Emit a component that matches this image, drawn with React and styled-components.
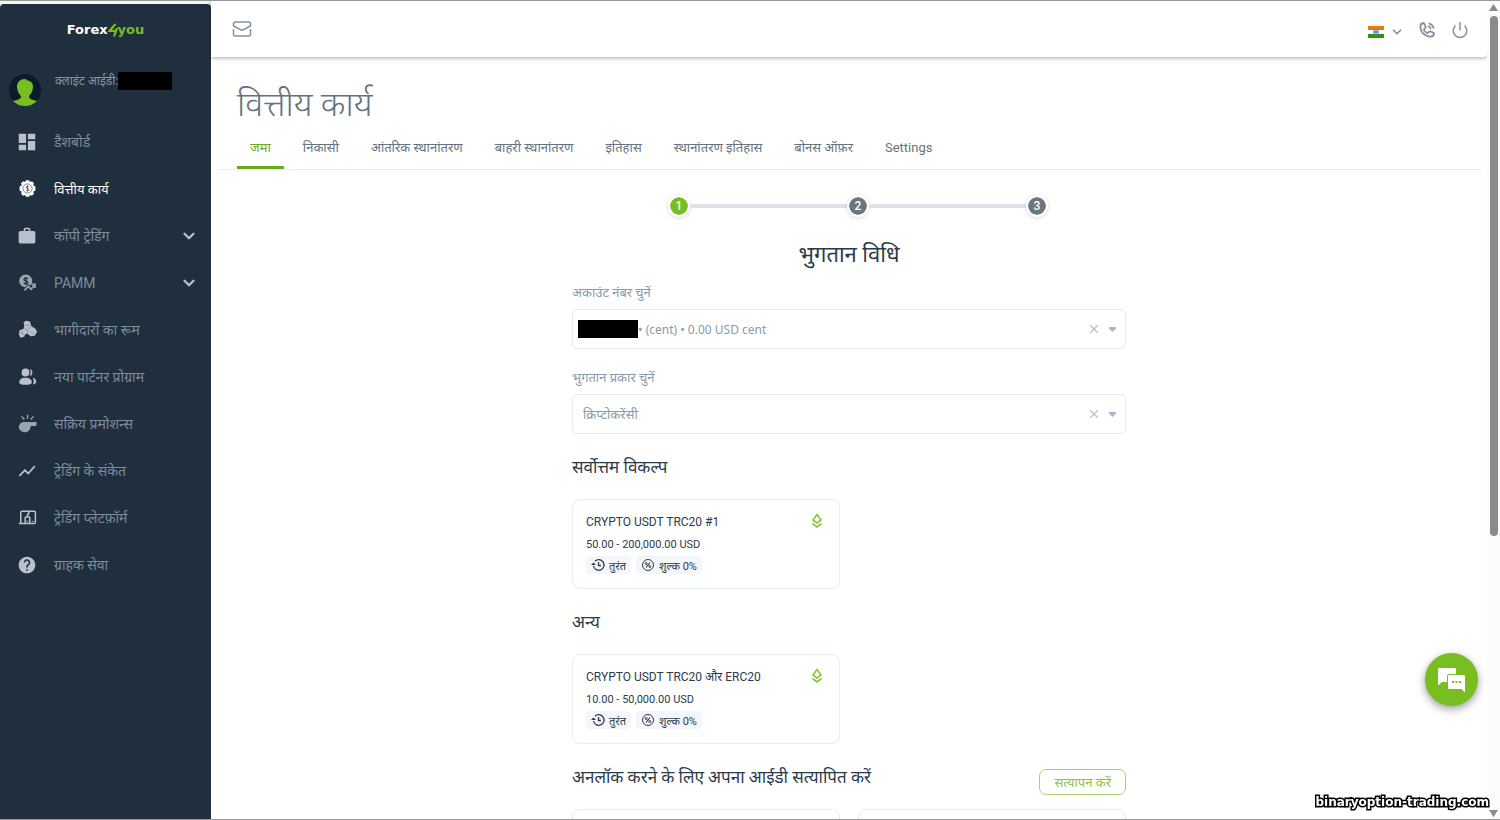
import { useState } from "react"
import styled, { createGlobalStyle, css } from "styled-components"
import { ChevronDown, Power, X } from "lucide-react"
import { MdDashboard, MdHelp, MdShowChart, MdWork } from "react-icons/md"
import { PiPhoneCallBold } from "react-icons/pi"

const GlobalStyle = createGlobalStyle`
  * {
    box-sizing: border-box;
  }
  body {
    margin: 0;
    background: #fff;
    color: #2b3b4a;
    font-family: Roboto, "Noto Sans", "Noto Sans Devanagari", sans-serif;
    font-size: 13px;
  }
  button, select {
    font: inherit;
    color: inherit;
    border: none;
    background: none;
    padding: 0;
  }
  h1, h2, h3, p, ul {
    margin: 0;
    padding: 0;
    font-weight: 400;
  }
`

const Page = styled.div`
  display: flex;
  height: 100vh;
  overflow: hidden;
  border-top: 1px solid #999;
  border-bottom: 1px solid #999;
`

const SidebarWrapper = styled.aside`
  flex: 0 0 211px;
  padding-top: 3px;
  background: #f2f4f5;
`

const SidebarPanel = styled.div`
  height: 100%;
  background: #202f3e;
  border-radius: 4px 4px 0 0;
`

const Logo = styled.a`
  display: flex;
  justify-content: center;
  align-items: center;
  height: 52px;
  color: #fff;
  font: 700 13px/20px "DejaVu Sans", sans-serif;
  text-decoration: none;
  span {
    color: #78be20;
  }
`

const Profile = styled.div`
  display: flex;
  align-items: flex-start;
  height: 62px;
  padding: 16px 9px 0;
  color: #8492a0;
  font-size: 12px;
  line-height: 18px;
  svg {
    margin: 2px 14px 0 0;
  }
`

const Redacted = styled.span`
  flex: none;
  width: ${(props) => props.$width}px;
  height: 18px;
  background: #000;
`

const NavList = styled.ul`
  list-style: none;
`

const NavLink = styled.a`
  display: flex;
  align-items: center;
  height: 47px;
  padding: 0 13px 0 16px;
  color: #7c8b9b;
  font-size: 14px;
  text-decoration: none;
  svg {
    flex: none;
    color: #b9c2cb;
  }
  ${(props) =>
    props.$active &&
    css`
      color: #fff;
      font-size: 13px;
      svg {
        color: #fff;
      }
    `}
`

const NavIcon = styled.span`
  display: grid;
  place-items: center;
  width: 22px;
`

const NavLabel = styled.span`
  flex: 1;
  margin-left: 16px;
`

const Main = styled.div`
  flex: 1;
  min-width: 0;
`

const Header = styled.header`
  display: flex;
  align-items: center;
  height: 56px;
  padding: 0 18px 0 21px;
  color: #8593a1;
  border-radius: 0 0 4px 0;
  box-shadow: 0 1px 4px rgba(0, 0, 0, 0.35);
`

const IconButton = styled.button`
  display: flex;
  align-items: center;
  cursor: pointer;
`

const HeaderTools = styled.div`
  display: flex;
  align-items: flex-end;
  gap: 14px;
  margin-left: auto;
`

const LanguageButton = styled(IconButton)`
  gap: 6px;
`

const PageTitle = styled.h1`
  padding: 22px 26px 0;
  color: #66727e;
  font-size: 34px;
  font-weight: 300;
  line-height: 50px;
`

const Tabs = styled.nav`
  display: flex;
  gap: 6px;
  margin: 0 6px 0 7px;
  padding-left: 19px;
  border-bottom: 1px solid #e9ebed;
`

const Tab = styled.a`
  padding: 9px 13px 8px;
  border-bottom: 3px solid transparent;
  color: #66727e;
  line-height: 20px;
  text-decoration: none;
  ${(props) =>
    props.$active &&
    css`
      color: #6aa81e;
      border-color: #6aa81e;
    `}
`

const Content = styled.main`
  width: 554px;
  max-width: 100%;
  margin: 0 auto;
  padding-top: 25px;
`

const Steps = styled.div`
  display: flex;
  align-items: center;
  margin: 0 78px 0 96px;
`

const Step = styled.span`
  width: 22px;
  height: 22px;
  border: 2px solid #fff;
  border-radius: 50%;
  background: ${(props) => (props.$active ? "#78be20" : "#6b7681")};
  background-clip: padding-box;
  box-shadow: 0 1px 4px rgba(0, 0, 0, 0.15);
  color: #fff;
  font-size: 12px;
  font-weight: 500;
  line-height: 18px;
  text-align: center;
`

const StepLine = styled.span`
  flex: 1;
  height: 4px;
  background: #dfe3e7;
`

const FormTitle = styled.h2`
  margin: 18px 0 8px;
  font-size: 22px;
  line-height: 40px;
  text-align: center;
`

const Fields = styled.div`
  display: grid;
  gap: 19px;
`

const Field = styled.div`
  label {
    display: block;
    margin-bottom: 6px;
    color: #8a9aa9;
    line-height: 20px;
  }
`

const SelectBox = styled.div`
  display: flex;
  align-items: center;
  height: 40px;
  padding: 0 9px 0 ${(props) => (props.$redacted ? 5 : 10)}px;
  border: 1px solid #e3ebf2;
  border-radius: 5px;
  color: #8a9aa9;
  font-family: "Noto Sans", "Noto Sans Devanagari", sans-serif;
  font-size: ${(props) => (props.$redacted ? 12 : 13)}px;
  select {
    flex: 1;
    height: 100%;
    appearance: none;
    outline: none;
  }
`

const ClearButton = styled(IconButton)`
  margin-right: 8px;
  color: #b3bfca;
`

const SectionHead = styled.div`
  display: flex;
  justify-content: space-between;
  align-items: center;
  height: 65px;
`

const SectionTitle = styled.h3`
  font-size: 17px;
  line-height: 28px;
`

const Cards = styled.div`
  display: grid;
  grid-template-columns: 1fr 1fr;
  gap: 18px;
`

const Card = styled.article`
  height: 90px;
  padding: 12px 16px 12px 13px;
  border: 1px solid #e6edf4;
  border-radius: 8px;
`

const CardHead = styled.div`
  display: flex;
  justify-content: space-between;
  font-size: 12px;
  line-height: 20px;
  svg {
    margin-top: 1px;
  }
`

const Limits = styled.p`
  margin: 5px 0 3px;
  font-size: 11px;
  line-height: 16px;
`

const Chips = styled.div`
  display: flex;
  gap: 5px;
`

const Chip = styled.span`
  display: flex;
  align-items: center;
  gap: 4px;
  height: 18px;
  padding: 0 5px;
  border-radius: 4px;
  background: #f4f6fa;
  font-size: 11px;
`

const VerifyButton = styled.button`
  height: 26px;
  margin-top: 10px;
  padding: 0 14px;
  border: 1px solid #a9d46c;
  border-radius: 7px;
  color: #8cc63f;
  cursor: pointer;
`

const ChatButton = styled.button`
  position: fixed;
  right: 22px;
  bottom: 114px;
  display: grid;
  place-items: center;
  width: 53px;
  height: 53px;
  border-radius: 50%;
  background: #78be20;
  box-shadow: 0 3px 8px rgba(0, 0, 0, 0.4);
  cursor: pointer;
`

const Watermark = styled.div`
  position: fixed;
  right: 11px;
  bottom: 9px;
  color: #fff;
  font: 700 12px/18px "DejaVu Sans", sans-serif;
  -webkit-text-stroke: 3px #000;
  paint-order: stroke fill;
`

const ScrollTrack = styled.div`
  display: flex;
  flex: 0 0 13px;
  flex-direction: column;
  align-items: center;
  justify-content: space-between;
  padding: 3px 0 2px;
  background: #fbfbfb;
`

const ScrollThumb = styled.div`
  width: 8px;
  height: 64%;
  margin: 5px 0 auto;
  border-radius: 4px;
  background: #8b8b8b;
`

function Svg({ w = 19, h = w, box = "0 0 24 24", children }) {
  return (
    <svg width={w} height={h} viewBox={box} fill="none" aria-hidden="true">
      {children}
    </svg>
  )
}

function AvatarIcon() {
  return (
    <Svg w={32} box="0 0 32 32">
      <circle cx="16" cy="16" r="16" fill="#0b1b2c" />
      <path
        d="M16 5c1 0 1.500 1 2.500 1.500C22 7 24 9 24 13c0 4-2 7-4 9 0 2 1 3 4 4l4 1c-3 3-7 5-12 5S7 30 4 27l4-1c3-1 4-2 4-4-2-2-4-5-4-9 0-5 3-8 8-8z"
        fill="#78be20"
      />
    </Svg>
  )
}

function GearCoinIcon() {
  return (
    <Svg>
      <path
        d="M10 1.500h4l1 2.300 2.600-1 2.600 2.600-1 2.600 2.800 1.500v5l-2.800 1.500 1 2.600-2.600 2.600-2.600-1-1 2.300h-4l-1-2.300-2.600 1-2.600-2.600 1-2.600L2 14.500v-5L4.800 8l-1-2.600 2.600-2.600 2.600 1z"
        fill="currentColor"
      />
      <circle cx="12" cy="12" r="5.800" stroke="#5b6773" strokeWidth="1" />
      <path
        d="M14 10c-.5-1-3.800-1.200-3.800.4 0 1.800 3.800 1.200 3.800 3 0 1.700-3.500 1.500-4 .3M12 8v8"
        stroke="#5b6773"
        strokeWidth="1.200"
      />
    </Svg>
  )
}

function PammIcon() {
  return (
    <Svg>
      <g opacity=".8">
        <path
          d="M10 2a8 8 0 0 1 8 8c0 1.300-.3 2.500-.8 3.500L15 16l-2-2-4 4A8 8 0 0 1 10 2z"
          fill="currentColor"
        />
        <path
          d="M12.500 7.500c-1-1.500-5-1.500-5 .7 0 2.300 5 1.300 5 3.700 0 2-4 2.200-5.200.5M10 5v10"
          stroke="#202f3e"
          strokeWidth="1.500"
        />
        <path
          d="M8 22l5-5 3.500 3.500L21 15M17 14.500h4.500V19"
          stroke="currentColor"
          strokeWidth="2.200"
        />
      </g>
    </Svg>
  )
}

function PartnersIcon() {
  return (
    <Svg>
      <path
        d="M7 3l3-2 5 1 2 6 5 3 2 4-3 5-5 .5-4-3-3 .5-1 3-5 1.500L1 18l1-5 5-2 1-3z"
        fill="currentColor"
      />
      <path
        d="M8 11l4 2 4-4M12 13l0 5M4 16l4 3M9 6l6 1M16 14l4 4M2 18l5-4"
        stroke="#7d8994"
        strokeWidth="1"
      />
    </Svg>
  )
}

function PeopleIcon() {
  return (
    <Svg>
      <g fill="currentColor">
        <circle cx="9.500" cy="7" r="5" />
        <path d="M1.500 19c0-3 3-5.500 8-5.500s8 2.500 8 5.500-3 3.500-8 3.500-8-.5-8-3.500z" />
        <path d="M15 2.300a5 5 0 0 1 0 9.400c1.500-3 1.500-6.400 0-9.400zM18.500 13.500c3 .6 4.500 2.500 4.500 5 0 2-1.500 3-4 3.500 1.200-3 1.200-6-.5-8.500z" />
      </g>
    </Svg>
  )
}

function WhistleIcon() {
  return (
    <Svg>
      <g opacity=".8">
        <path
          d="M8 10h15.500v3c0 1.500-1 2-2 2h-5.500c0 4-3 8-7.500 8A7 7 0 0 1 1 16.500C1 13 4 10 8 10z"
          fill="currentColor"
        />
        <path
          d="M12 1v5M4.500 3L8 7M19.500 3L16 7"
          stroke="currentColor"
          strokeWidth="1.800"
        />
      </g>
    </Svg>
  )
}

function DevicesIcon() {
  return (
    <Svg>
      <path
        d="M1 19.500h8M3.500 19V5.500C3.500 4.500 4 4 5 4h11M9 19.500v-7c0-.7.300-1 1-1h4c.7 0 1 .3 1 1v7zM12 11V7.500M12 7.500h1.500V5.500c0-1 .5-1.500 1.500-1.500h5.500c1 0 1.500.5 1.500 1.500V18c0 1-.5 1.500-1.500 1.500H15"
        stroke="currentColor"
        strokeWidth="1.900"
      />
      <path d="M11 17h2M18 17h1.500" stroke="currentColor" strokeWidth="1.500" />
    </Svg>
  )
}

function MailIcon() {
  return (
    <Svg w={20} h={16} box="0 0 20 16">
      <path
        d="M1.500 8v5.500c0 1 .5 1.500 1.500 1.500h14c1 0 1.500-.5 1.500-1.500V8M1.500 5V3c0-1.200.8-2 2-2h13c1.200 0 2 .8 2 2v2L10 9.500z"
        stroke="currentColor"
        strokeWidth="1.500"
      />
    </Svg>
  )
}

function FlagIcon() {
  return (
    <Svg w={16} h={12} box="0 0 16 12">
      <path d="M0 0h16v4H0z" fill="#e77817" />
      <path d="M0 4h16v4H0z" fill="#fff" />
      <path d="M0 8h16v4H0z" fill="#2e9210" />
      <circle cx="8" cy="6" r="2.500" fill="#a9b6e4" stroke="#6d83c9" />
      <circle cx="8" cy="6" r="1" fill="#5c70bd" />
    </Svg>
  )
}

function CryptoIcon() {
  return (
    <Svg w={12} h={16} box="0 0 12 16">
      <path
        d="M6 1.500l4 5.500-4 3-4-3zM1.500 10.500L6 14l4.500-3.500"
        stroke="#84c735"
        strokeWidth="1.600"
      />
    </Svg>
  )
}

function HistoryIcon() {
  return (
    <Svg w={14} box="0 0 14 14">
      <path
        d="M2.500 8A5.300 5.300 0 1 0 4 3.200M7.500 4v3.500H10"
        stroke="currentColor"
        strokeWidth="1.300"
      />
      <path d="M0 7h5L2.500 4.500z" fill="currentColor" />
    </Svg>
  )
}

function PercentIcon() {
  return (
    <Svg w={14} box="0 0 14 14">
      <circle cx="7" cy="7" r="5.500" stroke="currentColor" />
      <path d="M9 4.500l-4 5" stroke="currentColor" strokeWidth="1.200" />
      <circle cx="5.200" cy="5.500" r="1" stroke="currentColor" />
      <circle cx="8.800" cy="8.500" r="1" stroke="currentColor" />
    </Svg>
  )
}

function ChatIcon() {
  return (
    <Svg w={28} h={24} box="0 0 28 24">
      <path
        d="M1.500 0h15C17.500 0 18 .5 18 1.500V6h-6.500C10 6 9 7 9 8.500V14H4l-4 3.500v-16C0 .5.500 0 1.500 0z"
        fill="#fff"
      />
      <path
        d="M11.500 7h14c1 0 1.500.5 1.500 1.500v16L23.500 21h-12c-1 0-1.500-.5-1.500-1.500v-11c0-1 .5-1.500 1.500-1.500z"
        fill="#fff"
      />
      <path d="M14 13h2v2h-2zM17.500 13h2v2h-2zM21 13h2v2h-2z" fill="#78be20" />
    </Svg>
  )
}

const navItems = [
  { label: "डैशबोर्ड", icon: <MdDashboard size={22} /> },
  { label: "वित्तीय कार्य", icon: <GearCoinIcon />, active: true },
  { label: "कॉपी ट्रेडिंग", icon: <MdWork size={20} />, nested: true },
  { label: "PAMM", icon: <PammIcon />, nested: true },
  { label: "भागीदारों का रूम", icon: <PartnersIcon /> },
  { label: "नया पार्टनर प्रोग्राम", icon: <PeopleIcon /> },
  { label: "सक्रिय प्रमोशन्स", icon: <WhistleIcon /> },
  { label: "ट्रेडिंग के संकेत", icon: <MdShowChart size={20} /> },
  { label: "ट्रेडिंग प्लेटफ़ॉर्म", icon: <DevicesIcon /> },
  { label: "ग्राहक सेवा", icon: <MdHelp size={20} /> },
]

const tabs = [
  "जमा",
  "निकासी",
  "आंतरिक स्थानांतरण",
  "बाहरी स्थानांतरण",
  "इतिहास",
  "स्थानांतरण इतिहास",
  "बोनस ऑफ़र",
  "Settings",
]

function Sidebar() {
  return (
    <SidebarWrapper>
      <SidebarPanel>
        <Logo href="#">
          Forex
          <Svg w={10} h={14} box="0 0 10 14">
            <path
              d="M7.500 1L1.500 8H8M9 5L6 13.500"
              stroke="#78be20"
              strokeWidth="2.200"
            />
          </Svg>
          <span>you</span>
        </Logo>
        <Profile>
          <AvatarIcon />
          क्लाइंट आईडी:
          <Redacted $width={54} />
        </Profile>
        <NavList>
          {navItems.map((item) => (
            <li key={item.label}>
              <NavLink href="#" $active={item.active}>
                <NavIcon>{item.icon}</NavIcon>
                <NavLabel>{item.label}</NavLabel>
                {item.nested && <ChevronDown size={18} strokeWidth={3} />}
              </NavLink>
            </li>
          ))}
        </NavList>
      </SidebarPanel>
    </SidebarWrapper>
  )
}

function SelectField({ id, label, value, redacted }) {
  const [selected, setSelected] = useState(value)

  return (
    <Field>
      <label htmlFor={id}>{label}</label>
      <SelectBox $redacted={redacted}>
        {redacted && <Redacted $width={60} />}
        <select
          id={id}
          value={selected}
          onChange={(e) => setSelected(e.target.value)}
        >
          <option value="" />
          <option value={value}>{value}</option>
        </select>
        <ClearButton aria-label="Clear" onClick={() => setSelected("")}>
          <X size={14} strokeWidth={2} />
        </ClearButton>
        <Svg w={7} h={5} box="0 0 7 5">
          <path d="M0 0h7v1.500L3.500 5 0 1.500z" fill="#aab7c4" />
        </Svg>
      </SelectBox>
    </Field>
  )
}

function PaymentCard({ name, limits }) {
  return (
    <Card>
      <CardHead>
        {name}
        <CryptoIcon />
      </CardHead>
      <Limits>{limits}</Limits>
      <Chips>
        <Chip>
          <HistoryIcon />
          तुरंत
        </Chip>
        <Chip>
          <PercentIcon />
          शुल्क 0%
        </Chip>
      </Chips>
    </Card>
  )
}

function App() {
  return (
    <>
      <GlobalStyle />
      <Page>
        <Sidebar />
        <Main>
          <Header>
            <IconButton aria-label="Mail">
              <MailIcon />
            </IconButton>
            <HeaderTools>
              <LanguageButton aria-label="Language">
                <FlagIcon />
                <ChevronDown size={14} strokeWidth={3} />
              </LanguageButton>
              <IconButton aria-label="Call">
                <PiPhoneCallBold size={19} />
              </IconButton>
              <IconButton aria-label="Log out">
                <Power size={18} strokeWidth={2} />
              </IconButton>
            </HeaderTools>
          </Header>
          <PageTitle>वित्तीय कार्य</PageTitle>
          <Tabs>
            {tabs.map((tab, i) => (
              <Tab key={tab} href="#" $active={i === 0}>
                {tab}
              </Tab>
            ))}
          </Tabs>
          <Content>
            <Steps>
              <Step $active>1</Step>
              <StepLine />
              <Step>2</Step>
              <StepLine />
              <Step>3</Step>
            </Steps>
            <FormTitle>भुगतान विधि</FormTitle>
            <Fields>
              <SelectField
                id="account"
                label="अकाउंट नंबर चुनें"
                value="• (cent) • 0.00 USD cent"
                redacted
              />
              <SelectField
                id="method"
                label="भुगतान प्रकार चुनें"
                value="क्रिप्टोकरेंसी"
              />
            </Fields>
            <SectionHead>
              <SectionTitle>सर्वोत्तम विकल्प</SectionTitle>
            </SectionHead>
            <Cards>
              <PaymentCard
                name="CRYPTO USDT TRC20 #1"
                limits="50.00 - 200,000.00 USD"
              />
            </Cards>
            <SectionHead>
              <SectionTitle>अन्य</SectionTitle>
            </SectionHead>
            <Cards>
              <PaymentCard
                name="CRYPTO USDT TRC20 और ERC20"
                limits="10.00 - 50,000.00 USD"
              />
            </Cards>
            <SectionHead>
              <SectionTitle>
                अनलॉक करने के लिए अपना आईडी सत्यापित करें
              </SectionTitle>
              <VerifyButton>सत्यापन करें</VerifyButton>
            </SectionHead>
            <Cards>
              <Card />
              <Card />
            </Cards>
          </Content>
        </Main>
        <ScrollTrack>
          <Svg w={9} h={7} box="0 0 9 7">
            <path d="M4.500 0L9 7H0z" fill="#8b8b8b" />
          </Svg>
          <ScrollThumb />
          <Svg w={9} h={7} box="0 0 9 7">
            <path d="M0 0h9L4.500 7z" fill="#8b8b8b" />
          </Svg>
        </ScrollTrack>
      </Page>
      <ChatButton aria-label="Chat">
        <ChatIcon />
      </ChatButton>
      <Watermark>binaryoption-trading.com</Watermark>
    </>
  )
}

export default App
